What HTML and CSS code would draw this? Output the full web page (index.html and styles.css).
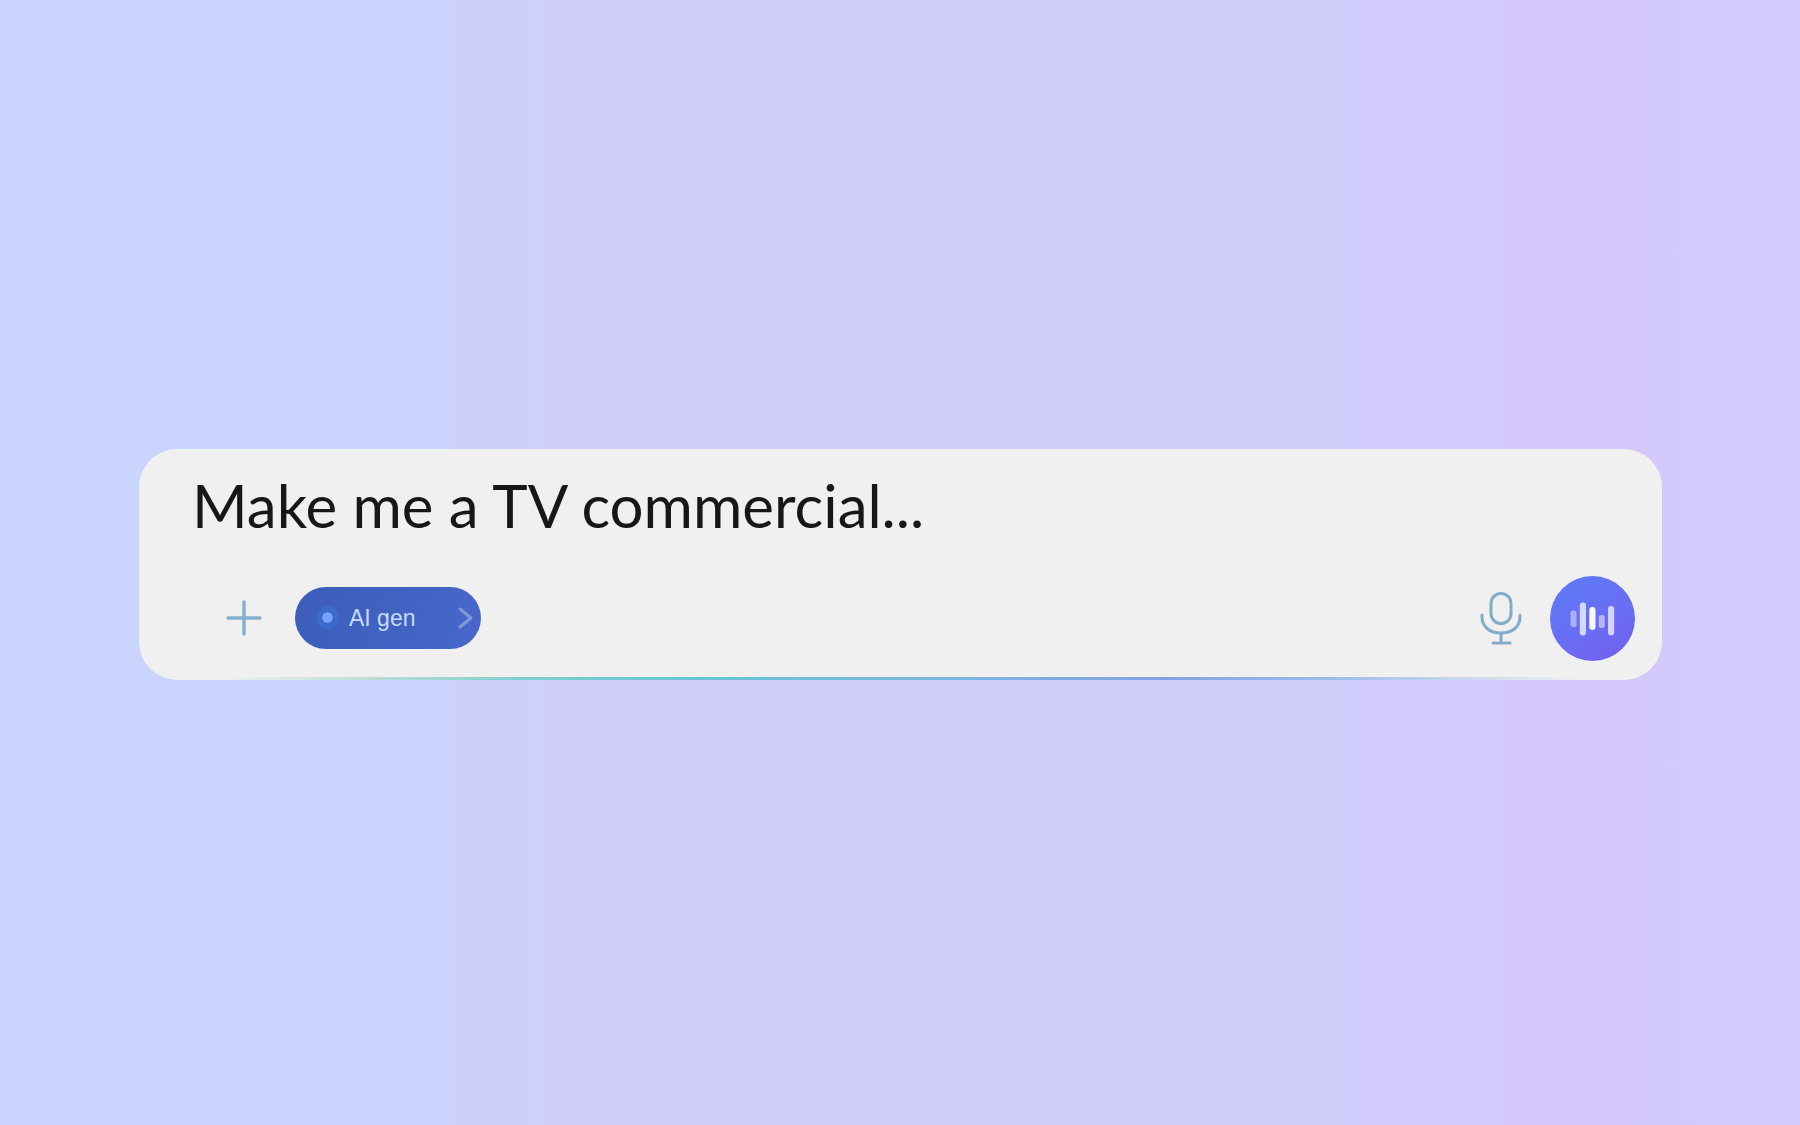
FILE: index.html
```html
<!DOCTYPE html>
<html lang="en">
<head>
    <meta charset="UTF-8">
    <meta name="viewport" content="width=device-width, initial-scale=1.0">
    <title>AI gen</title>
    <link rel="stylesheet" href="styles.css">
</head>
<body>
    <form class="prompt-card">
        <input class="prompt-input" type="text" aria-label="Prompt" value="Make me a TV commercial...">
        <div class="toolbar">
            <div class="tools">
                <button class="icon-btn" type="button" aria-label="Add">
                    <svg width="36" height="36" viewBox="0 0 36 36" fill="none" stroke="#86b0cb" stroke-width="3.5" stroke-linecap="round">
                        <path d="M18 2v32M2 18h32"/>
                    </svg>
                </button>
                <button class="gen-btn" type="button">
                    <span class="dot"></span>
                    <span class="gen-label">AI gen</span>
                    <svg width="16" height="22" viewBox="0 0 16 22" fill="none" stroke="#8097d4" stroke-width="3" stroke-linecap="round" stroke-linejoin="round">
                        <path d="M3 2l11 9L3 20"/>
                    </svg>
                </button>
            </div>
            <div class="voice">
                <button class="icon-btn" type="button" aria-label="Dictate">
                    <svg width="42" height="54" viewBox="0 0 42 54" fill="none" stroke="#82adc8" stroke-width="3" stroke-linecap="round">
                        <rect x="11" y="1.5" width="20" height="30" rx="10"/>
                        <path d="M2 23v2c0 10 8 16 19 16s19-6 19-16v-2M21 41v10M13 51h17"/>
                    </svg>
                </button>
                <button class="wave-btn" type="button" aria-label="Voice mode">
                    <svg width="46" height="34" viewBox="0 0 46 34" fill="#fff">
                        <rect x="0.5" y="8.5" width="6" height="16.5" rx="2.5" opacity="0.45"/>
                        <rect x="9.8" y="0.5" width="6.2" height="33" rx="3" opacity="0.72"/>
                        <rect x="19.3" y="5" width="6.2" height="23" rx="3" opacity="0.95"/>
                        <rect x="28.7" y="13" width="6" height="13" rx="2.5" opacity="0.5"/>
                        <rect x="38" y="4" width="6.2" height="29.5" rx="3" opacity="0.7"/>
                    </svg>
                </button>
            </div>
        </div>
    </form>
</body>
</html>
```
FILE: styles.css
```css
body {
    margin: 0;
    padding: 4px 138px 0 139px;
    box-sizing: border-box;
    min-height: 100vh;
    display: flex;
    align-items: center;
    font-family: 'Liberation Sans', Arial, sans-serif;
    background: linear-gradient(90deg,
        #c9d4ff 0%, #cbd4ff 25%,
        #cbd1fa 25%, #cdd1fb 30%,
        #cfcff9 30%, #cfcef7 56%,
        #d0cdfb 61%, #d0cdfb 75%,
        #d3cbfc 76%, #d3cafc 83%,
        #d4c8fb 84%, #d4c9fb 100%);
}
.prompt-card {
    position: relative;
    flex: 1;
    min-width: 0;
    padding: 20px 27px 19px 53px;
    box-sizing: border-box;
    background: #f0f0f0;
    border-radius: 38px;
}
/* glowing line along the bottom edge */
.prompt-card::after {
    content: "";
    position: absolute;
    left: 38px;
    right: 38px;
    bottom: 0;
    height: 3px;
    background: linear-gradient(90deg, transparent 3%, #b8dcd4 14%, #7dcfcd 24%, #67c5d3 36%, #7db5df 55%, #84a1e4 68%, #9dbce9 80%, transparent 97%);
}
.prompt-input {
    display: block;
    width: 100%;
    height: 72px;
    margin: 0 0 35px;
    padding: 0;
    border: none;
    outline: none;
    background: none;
    color: #171717;
    font-family: Lato, 'Noto Sans', sans-serif;
    font-size: 60px;
}
.toolbar, .tools, .voice {
    display: flex;
    align-items: center;
}
.toolbar {
    justify-content: space-between;
}
.tools {
    gap: 18px;
    padding: 0 0 2px 19px;
}
.voice {
    gap: 16px;
}
button {
    display: flex;
    align-items: center;
    padding: 0;
    border: none;
    background: none;
    cursor: pointer;
}
.icon-btn {
    justify-content: center;
    width: 66px;
    height: 66px;
}
.gen-btn {
    width: 186px;
    height: 62px;
    padding: 0 8px 0 21px;
    box-sizing: border-box;
    border-radius: 31px;
    background: linear-gradient(110deg, #3d5db9, #4767cb);
}
.dot {
    width: 11px;
    height: 11px;
    border: 6px solid #3c6acb;
    border-radius: 50%;
    background: #78a2ff;
    background-clip: padding-box;
}
.gen-label {
    flex: 1;
    margin-left: 10px;
    padding-top: 2px;
    color: #c5dcff;
    font-size: 23px;
    text-align: left;
}
.wave-btn {
    justify-content: center;
    width: 85px;
    height: 85px;
    border-radius: 50%;
    background: linear-gradient(150deg, #5f78f4 15%, #6b6cf5 60%, #7060ee 95%);
}
```
